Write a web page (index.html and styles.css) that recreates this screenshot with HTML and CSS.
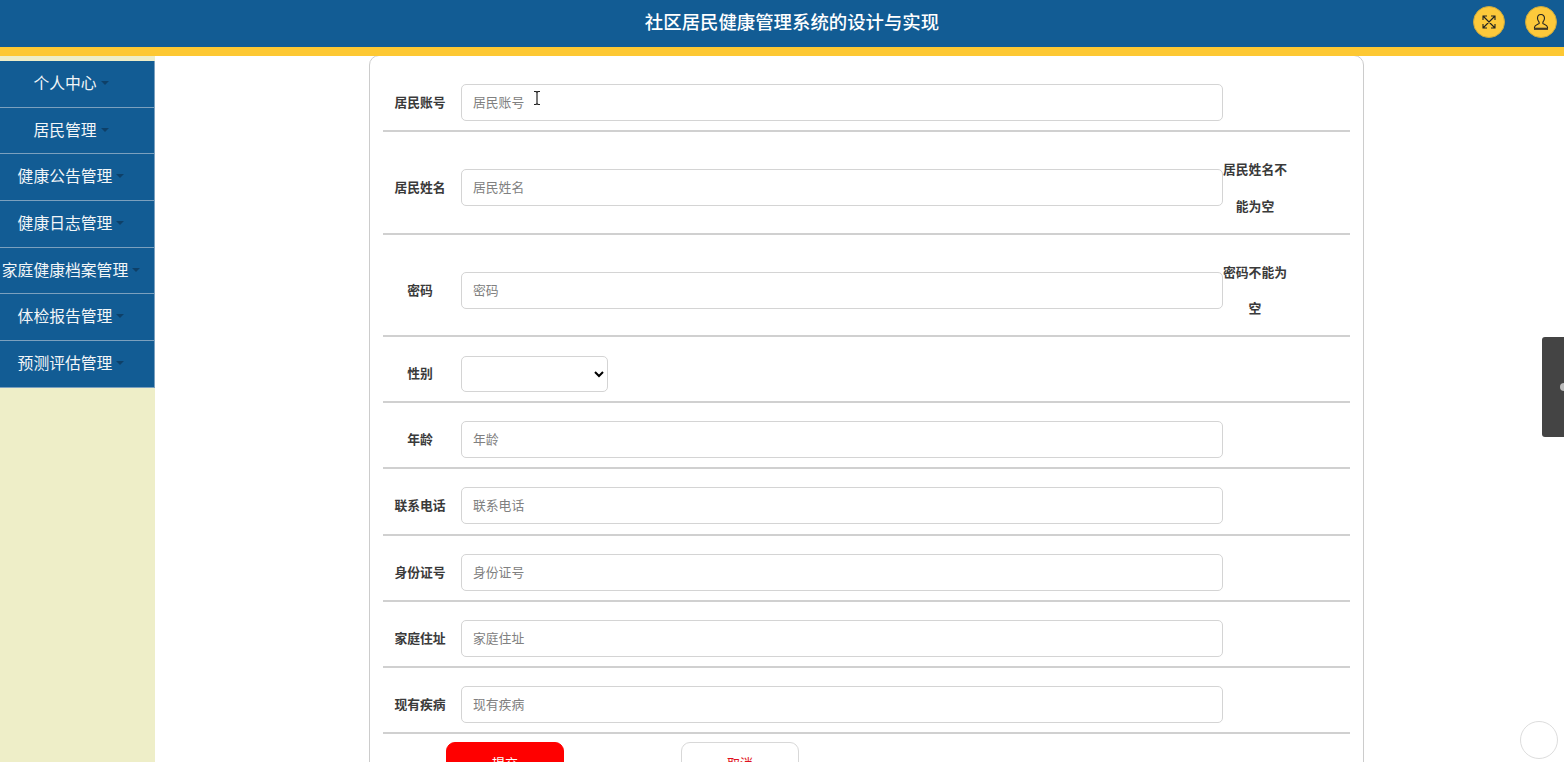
FILE: index.html
```html
<!DOCTYPE html>
<html lang="zh">
<head>
<meta charset="utf-8">
<title>社区居民健康管理系统的设计与实现</title>
<link rel="stylesheet" href="styles.css">
</head>
<body>
<header class="topbar">
  <h1 class="title">社区居民健康管理系统的设计与实现</h1>
  <div class="actions">
    <span class="round-btn">
      <svg viewBox="0 0 16 16" width="16" height="16" fill="none" stroke="#222" stroke-width="1.1"><path d="M2.500 2.500 13.500 13.500M13.500 2.500 2.500 13.500M2 6V2h4M10 2h4v4M14 10v4h-4M6 14H2v-4"/></svg>
    </span>
    <span class="round-btn">
      <svg viewBox="0 0 18 18" width="18" height="18" fill="none" stroke="#222" stroke-width="1.1"><path d="M9 1.500c-2.200 0-3.500 1.700-3.500 3.800 0 1.700.8 3 1.600 3.900v1.400c-.9.8-4.600 1.600-4.600 3.600v1h13v-1c0-2-3.700-2.800-4.600-3.600V9.200c.8-.9 1.600-2.200 1.600-3.900C12.500 3.200 11.200 1.500 9 1.500z"/><path d="M2 16.200h14"/></svg>
    </span>
  </div>
</header>
<div class="layout">
  <nav class="sidebar">
    <ul class="menu">
      <li class="menu-item">个人中心<i class="caret"></i></li>
      <li class="menu-item">居民管理<i class="caret"></i></li>
      <li class="menu-item">健康公告管理<i class="caret"></i></li>
      <li class="menu-item">健康日志管理<i class="caret"></i></li>
      <li class="menu-item">家庭健康档案管理<i class="caret"></i></li>
      <li class="menu-item">体检报告管理<i class="caret"></i></li>
      <li class="menu-item">预测评估管理<i class="caret"></i></li>
    </ul>
  </nav>
  <main class="content">
    <form class="card">
      <div class="row row-first"><label class="label">居民账号</label><input class="field" placeholder="居民账号"></div>
      <div class="row row-tall"><label class="label">居民姓名</label><input class="field" placeholder="居民姓名"><span class="error">居民姓名不能为空</span></div>
      <div class="row row-tall"><label class="label">密码</label><input class="field" placeholder="密码"><span class="error">密码不能为空</span></div>
      <div class="row"><label class="label">性别</label><select class="select"><option></option></select></div>
      <div class="row"><label class="label">年龄</label><input class="field" placeholder="年龄"></div>
      <div class="row"><label class="label">联系电话</label><input class="field" placeholder="联系电话"></div>
      <div class="row"><label class="label">身份证号</label><input class="field" placeholder="身份证号"></div>
      <div class="row"><label class="label">家庭住址</label><input class="field" placeholder="家庭住址"></div>
      <div class="row"><label class="label">现有疾病</label><input class="field" placeholder="现有疾病"></div>
      <div class="buttons">
        <button type="button" class="btn btn-primary">提交</button>
        <button type="button" class="btn btn-cancel">取消</button>
      </div>
    </form>
  </main>
</div>
<div class="side-tab"><span class="side-dot"></span></div>
<div class="float-circle"></div>
<svg class="ibeam" viewBox="0 0 8 14" width="8" height="14" fill="none" stroke="#222" stroke-width="1.2"><path d="M1 .5h2l1 1 1-1h2M1 13.500h2l1-1 1 1h2M4 1.500v11"/></svg>
</body>
</html>
```
FILE: styles.css
```css
* { box-sizing: border-box; }
html, body { margin: 0; height: 762px; overflow: hidden; background: #fff; }
body { font-family: "Noto Sans CJK SC", "Liberation Sans", sans-serif; color: #333; }

.topbar {
  height: 56px;
  background: #125c94;
  border-bottom: 9px solid #fdc833;
  display: flex;
  align-items: center;
  justify-content: center;
  position: relative;
  padding-left: 20px;
}
.title { margin: -5px 0 0; color: #fff; font-size: 18.4px; font-weight: 500; line-height: 47px; }
.actions { position: absolute; top: 6px; right: 7px; display: flex; gap: 20px; }
.round-btn {
  width: 32px; height: 32px; border-radius: 50%;
  background: #fdc93b; border: 1px solid #c9a83f;
  display: flex; align-items: center; justify-content: center;
}

.layout { display: flex; height: 706px; }
.sidebar { width: 155px; flex: none; background: #eeeec8; padding-top: 5px; }
.menu { list-style: none; margin: 0; padding: 0; }
.menu-item {
  height: 46.7px;
  background: #125c94;
  border-bottom: 1px solid #7ba0be;
  border-right: 1px solid #7ba0be;
  color: #f2f6f8;
  font-size: 15.800px;
  line-height: 43px;
  text-align: center;
  white-space: nowrap;
}
.caret {
  display: inline-block;
  width: 0; height: 0;
  margin: 0 12px 0 4px;
  vertical-align: 4px;
  border-left: 4.500px solid transparent;
  border-right: 4.500px solid transparent;
  border-top: 4px solid #0e4068;
}

.content { flex: 1; padding-left: 214px; margin-top: -1px; }
.card {
  width: 995px;
  height: 760px;
  background: #fff;
  border: 1px solid #ccc;
  border-radius: 10px;
  padding: 0 13px;
}
.row {
  display: flex;
  align-items: center;
  border-bottom: 2px solid #d0d0d0;
  padding: 18px 0 9px;
  min-height: 66.200px;
}
.row-first { padding-top: 28px; height: 76px; }
.row-tall { min-height: 102.500px; padding: 19px 0 8px; }
.label {
  width: 78px; flex: none;
  text-align: center;
  padding-right: 4px;
  margin-top: -2px;
  font-size: 12.800px;
  font-weight: 700;
  color: #3a3a3a;
}
.field {
  width: 762px; height: 37px; flex: none;
  border: 1px solid #d4d4d4;
  border-radius: 5px;
  padding: 0 11px 2px;
  font: inherit;
  font-size: 12.800px;
  outline: none;
}
.field::placeholder { color: #808080; opacity: 1; }
.select {
  width: 147px; height: 36px; flex: none;
  border: 1px solid #d4d4d4;
  border-radius: 5px;
  background: #fff;
  font: inherit;
  font-size: 12.800px;
}
.error {
  width: 64px; flex: none;
  font-size: 12.800px;
  font-weight: 700;
  line-height: 36.750px;
  text-align: center;
  color: #3a3a3a;
}
.buttons { display: flex; padding: 8px 0 0 63px; gap: 117px; }
.btn {
  width: 118px; height: 40px;
  border-radius: 9px;
  font: inherit;
  font-size: 13px;
  padding: 0;
}
.btn-primary { background: #f00; border: 1px solid #f00; color: #fff; }
.btn-cancel { background: #fff; border: 1px solid #d8d8d8; color: #e01020; }

.side-tab {
  position: absolute; left: 1542px; top: 337px;
  width: 22px; height: 100px;
  background: #444;
  border-radius: 3px 0 0 3px;
}
.side-dot {
  position: absolute; right: 0; top: 46px;
  width: 4px; height: 8px;
  background: #bbb;
  border-radius: 4px 0 0 4px;
}
.float-circle {
  position: absolute; left: 1520px; top: 721px;
  width: 38px; height: 38px;
  border-radius: 50%;
  border: 1px solid #ddd;
  background: #fff;
}
.ibeam { position: absolute; left: 533px; top: 91px; }
```
